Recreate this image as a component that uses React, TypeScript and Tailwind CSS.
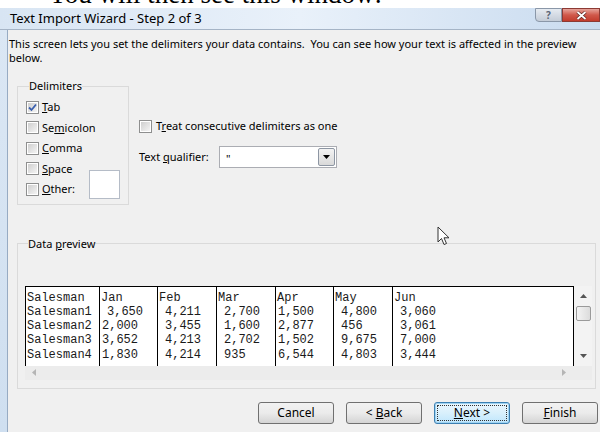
import React from 'react';

const ui = "font-['Noto_Sans',sans-serif] text-[11px] leading-[14px] text-black";

const rows = [
  ['Salesman', 'Jan', 'Feb', 'Mar', 'Apr', 'May', 'Jun'],
  ['Salesman1', '3,650', '4,211', '2,700', '1,500', '4,800', '3,060'],
  ['Salesman2', '2,000', '3,455', '1,600', '2,877', '456', '3,061'],
  ['Salesman3', '3,652', '4,213', '2,702', '1,502', '9,675', '7,000'],
  ['Salesman4', '1,830', '4,214', '935', '6,544', '4,803', '3,444'],
];

// column widths (border included) and left indent of each cell
const colWidths = ['w-[74px]', 'w-[58px]', 'w-[59px]', 'w-[59px]', 'w-[58px]', 'w-[59px]', 'flex-1'];
const indent = (col: number, row: number) => {
  if (row === 0 || col === 0) return 'pl-[1px]';
  if (col === 1) return row === 1 ? 'pl-[7px]' : 'pl-[2px]';
  if (col === 4) return 'pl-[2px]';
  return 'pl-[7px]';
};

const Check = ({ checked = false }: { checked?: boolean }) => (
  <span className="w-[13px] h-[13px] shrink-0 border border-[#8e8f8f] bg-white p-[1px] flex">
    <span className="flex-1 bg-gradient-to-br from-[#cfcfcf] to-[#f4f4f4] flex items-center justify-center">
      {checked && (
        <svg width="9" height="9" viewBox="0 0 9 9">
          <path d="M1 4.5 L3.5 7 L8 1.5" fill="none" stroke="#3a5fae" strokeWidth="1.8" />
        </svg>
      )}
    </span>
  </span>
);

const Option = ({ label, k, checked }: { label: string; k: number; checked?: boolean }) => (
  <div className="flex items-center gap-[3px]">
    <Check checked={checked} />
    <span>
      {label.slice(0, k)}
      <u>{label[k]}</u>
      {label.slice(k + 1)}
    </span>
  </div>
);

const Button = ({ children, focused }: { children: React.ReactNode; focused?: boolean }) => (
  <button
    className={`w-[76px] h-[22px] rounded-[3px] border ${
      focused
        ? 'border-[#3c7fb1] shadow-[inset_0_0_0_1px_#9fd3f2] bg-gradient-to-b from-[#eaf6fd] via-[#d9f0fc] to-[#bee6fd]'
        : 'border-[#707070] bg-gradient-to-b from-[#f2f2f2] via-[#ebebeb] to-[#d4d4d4]'
    } p-[2px] flex text-[12px]`}
  >
    <span
      className={`flex-1 flex items-center justify-center whitespace-pre ${
        focused ? 'border border-dotted border-[#333]' : 'border border-transparent'
      }`}
    >
      {children}
    </span>
  </button>
);

const Wizard = () => {
  return (
    <div className="flex flex-col flex-1">
      {/* caption */}
      <div className="h-[22px] flex justify-between bg-gradient-to-r from-[#d8e5f3] via-[#e9f1fa] to-[#c9dbef] border-b border-[#a5b4c6]">
        <div className="pl-[10px] pt-[2px] text-[13px] leading-[16px]">Text Import Wizard - Step 2 of 3</div>
        <div className="flex h-[14px]">
          <div className="w-[27px] border border-[#8a97a8] rounded-bl-[4px] bg-gradient-to-b from-[#e6ebf1] to-[#c4ccd7] flex items-center justify-center">
            <span className="text-[10px] leading-none font-bold text-[#5b6677]">?</span>
          </div>
          <div className="w-[38px] border border-[#8c3a34] bg-gradient-to-b from-[#e5a39b] via-[#d0584a] to-[#c23b2c] flex items-center justify-center">
            <svg width="11" height="9" viewBox="0 0 11 9">
              <path d="M1.5 1 L9.5 8 M9.5 1 L1.5 8" stroke="#5a2320" strokeWidth="3.2" />
              <path d="M1.5 1 L9.5 8 M9.5 1 L1.5 8" stroke="#fff" strokeWidth="1.8" />
            </svg>
          </div>
        </div>
      </div>

      <div className="flex flex-1">
        <div className="w-[7px] bg-gradient-to-b from-[#dbe7f4] to-[#cfdff0]" />
        <div className="flex-1 bg-[#f0f0f0] border-l border-[#97abc3] flex flex-col">
          <p className="pl-[1px] pt-[7px] whitespace-nowrap">
            This screen lets you set the delimiters your data contains.&nbsp; You can see how your text is affected in the preview
            <br />
            below.
          </p>

          <div className="flex items-start mt-[14px] pl-[9px]">
            <fieldset className="w-[112px] border border-[#dadada] pl-[8px] pb-[4px]">
              <legend className="ml-[3px] px-0">Delimiters</legend>
              <div className="flex flex-col mt-[4px]">
                <div className="h-[20.5px] flex items-center"><Option label="Tab" k={0} checked /></div>
                <div className="h-[20.5px] flex items-center"><Option label="Semicolon" k={2} /></div>
                <div className="h-[20.5px] flex items-center"><Option label="Comma" k={0} /></div>
                <div className="h-[20.5px] flex items-center"><Option label="Space" k={0} /></div>
                <div className="h-[20.5px] flex items-center justify-between pr-[8px]">
                  <Option label="Other:" k={0} />
                  <span className="mb-[9px] w-[31px] h-[29px] bg-white border border-[#b5bcc7]" />
                </div>
              </div>
            </fieldset>

            <div className="ml-[10px] pt-[37px] flex flex-col">
              <div className="h-[20px] flex items-center gap-[4px]">
                <Check />
                <span>
                  T<u>r</u>eat consecutive delimiters as one
                </span>
              </div>
              <div className="mt-[10px] flex items-center">
                <span className="w-[80px]">
                  Text <u>q</u>ualifier:
                </span>
                <div className="w-[118px] h-[22px] bg-white border border-[#abadb3] flex items-center justify-between pl-[6px] pr-[1px]">
                  <span className="leading-none pt-[2px]">"</span>
                  <span className="w-[17px] h-[18px] border border-[#8d96a3] rounded-[2px] bg-gradient-to-b from-[#f3f3f3] to-[#d9d9d9] flex items-center justify-center">
                    <svg width="7" height="4" viewBox="0 0 7 4">
                      <path d="M0 0 H7 L3.5 4 Z" fill="#000" />
                    </svg>
                  </span>
                </div>
              </div>
            </div>
          </div>

          <fieldset className="mt-[32px] ml-[9px] w-[579px] border border-[#dadada] pl-[7px] pr-[3px] pb-[8px]">
            <legend className="ml-[3px]">
              Data <u>p</u>review
            </legend>
            <div className="mt-[35px] flex flex-col">
              <div className="flex h-[80px]">
                <div className="flex-1 flex bg-white border-t border-black font-['Liberation_Mono',monospace] text-[12px] leading-[14.3px] text-[#1a1a1a] pt-[4px]">
                  {rows[0].map((_, c) => (
                    <div key={c} className={`${colWidths[c]} border-l border-black -mt-[4px] pt-[4px]`}>
                      {rows.map((r, i) => (
                        <div key={i} className={`${indent(c, i)} whitespace-pre`}>
                          {r[c]}
                        </div>
                      ))}
                    </div>
                  ))}
                  <div className="border-l border-black -mt-[4px]" />
                </div>
                <div className="w-[18px] bg-[#f3f3f3] flex flex-col items-center">
                  <svg className="mt-[8px]" width="7" height="4" viewBox="0 0 7 4">
                    <path d="M3.5 0 L7 4 H0 Z" fill="#555" />
                  </svg>
                  <span className="mt-[8px] w-[15px] h-[15px] border border-[#9a9a9a] rounded-[2px] bg-gradient-to-r from-[#f4f4f4] to-[#dcdcdc]" />
                  <span className="flex-1" />
                  <svg className="mb-[8px]" width="7" height="4" viewBox="0 0 7 4">
                    <path d="M0 0 H7 L3.5 4 Z" fill="#555" />
                  </svg>
                </div>
              </div>
              <div className="h-[14px] flex items-center bg-[#ececec]">
                <svg className="ml-[7px]" width="4" height="7" viewBox="0 0 4 7">
                  <path d="M4 0 V7 L0 3.5 Z" fill="#b5b5b5" />
                </svg>
                <span className="flex-1" />
                <svg className="mr-[26px]" width="4" height="7" viewBox="0 0 4 7">
                  <path d="M0 0 V7 L4 3.5 Z" fill="#b5b5b5" />
                </svg>
              </div>
            </div>
          </fieldset>

          <div className="mt-[13px] pr-[2px] flex justify-end gap-[12px]">
            <Button>Cancel</Button>
            <Button>
              {'< '}
              <u>B</u>ack
            </Button>
            <Button focused>
              <u>N</u>ext{' >'}
            </Button>
            <Button>
              <u>F</u>inish
            </Button>
          </div>
        </div>
      </div>
    </div>
  );
};

export default function App() {
  return (
    <div className={`w-[600px] h-[432px] overflow-hidden bg-white flex flex-col relative ${ui}`}>
      <div className="h-[8px] overflow-hidden shrink-0">
        <div className="font-['Liberation_Serif',serif] text-[27px] leading-[27px] -mt-[19px] pl-[48px] whitespace-nowrap">
          You will then see this window:
        </div>
      </div>
      <Wizard />

      {/* mouse pointer */}
      <svg className="absolute left-[437px] top-[226px]" width="13" height="20" viewBox="0 0 13 20">
        <path
          d="M1 1 L1 16 L4.5 12.5 L7 18.5 L9.5 17.5 L7 11.8 L12 11.8 Z"
          fill="#fff"
          stroke="#333"
          strokeWidth="1"
          strokeLinejoin="round"
        />
      </svg>
    </div>
  );
}
